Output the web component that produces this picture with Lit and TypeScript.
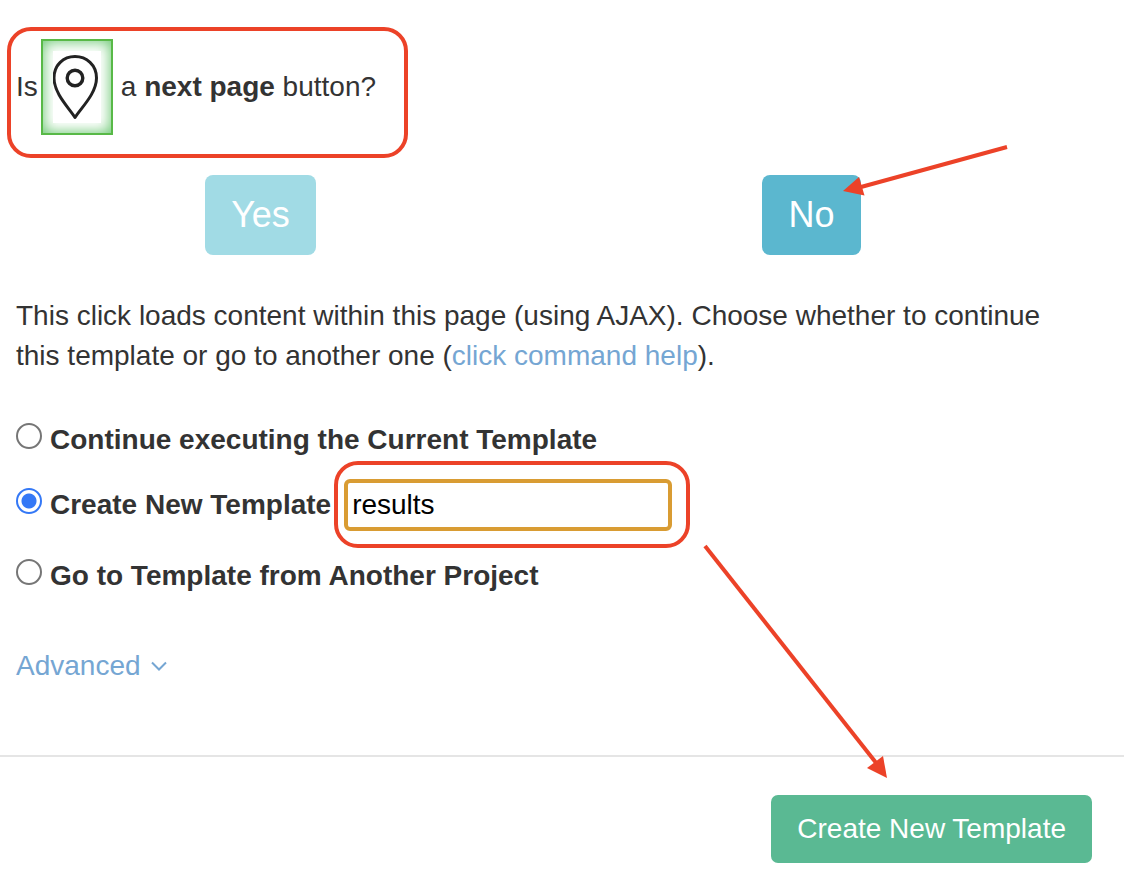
import { LitElement, html, css } from "lit";
import { customElement, state } from "lit/decorators.js";

@customElement("app-root")
export class AppRoot extends LitElement {
  @state() private choice = "create";
  @state() private templateName = "results";

  static styles = css`
    :host {
      display: block;
      background: #fff;
      color: #333;
      font-family: "Liberation Sans", Arial, sans-serif;
      font-size: 28px;
      line-height: 40px;
      overflow-x: hidden;
    }
    * { box-sizing: border-box; }
    button, input { font: inherit; margin: 0; }
    a { color: #75a6d3; text-decoration: none; }
    .content { padding: 39px 16px 69px; }
    .question {
      position: relative;
      display: flex;
      align-items: center;
      width: fit-content;
      margin: 0;
      white-space: pre;
    }
    .marker {
      display: flex;
      width: 72px;
      height: 96px;
      margin: 0 8px 0 3px;
      padding: 10px;
      border: 2px solid #58b947;
      box-shadow: inset 0 0 14px 1px #6cc873;
    }
    .marker svg { display: block; width: 48px; height: 72px; background: #fff; }
    .ring {
      position: absolute;
      border: 4px solid #ec4228;
      border-radius: 24px;
      pointer-events: none;
    }
    .ring-question { inset: -12px -32px -23px -9px; }
    .ring-name { inset: -18px -18px -17px -10px; }
    .answers {
      display: grid;
      grid-template-columns: 1fr 1fr;
      justify-items: center;
      margin: 40px 21px 41px -31px;
    }
    .anchor { position: relative; display: flex; }
    .answer {
      height: 80px;
      padding: 0 26px;
      border: 0;
      border-radius: 8px;
      color: #fff;
      font-size: 36px;
    }
    .yes { background: #a1dbe5; }
    .no { background: #5bb7cf; }
    .arrow { position: absolute; pointer-events: none; fill: #ec4228; stroke: none; }
    .arrow path.shaft { stroke: #ec4228; stroke-width: 4; }
    .arrow-no { left: 81px; top: -30px; }
    .arrow-submit { right: 203px; top: -251px; }
    .intro { margin: 0 0 44px; max-width: 1060px; }
    .options { margin: 0 0 50px; padding: 0; border: 0; }
    .option { display: flex; align-items: center; }
    .option-name { margin: 19px 0 25px; }
    .option label { display: flex; align-items: flex-start; gap: 8px; font-weight: bold; }
    .radio {
      appearance: none;
      flex: none;
      width: 26px;
      height: 26px;
      margin-top: 3px;
      border: 2px solid #767676;
      border-radius: 50%;
      background: #fff;
    }
    .radio:checked {
      border-color: #3478f6;
      background: radial-gradient(circle, #3478f6 7px, #fff 8px);
    }
    .name-field { position: relative; margin-left: 13px; }
    .name {
      display: block;
      width: 328px;
      height: 52px;
      padding: 0 4px;
      border: 4px solid #d99c33;
      border-radius: 6px;
      outline: 0;
      color: #000;
      background: #fff;
    }
    .advanced { display: flex; align-items: center; gap: 10px; width: fit-content; }
    .advanced svg { width: 16px; height: 10px; fill: none; stroke: #75a6d3; stroke-width: 2; }
    .footer {
      display: flex;
      justify-content: flex-end;
      padding: 38px 32px 19px;
      border-top: 2px solid #e5e5e5;
    }
    .submit {
      height: 68px;
      padding: 0 26px;
      border: 0;
      border-radius: 7px;
      color: #fff;
      background: #5ab993;
    }
  `;

  private radio(value: string) {
    return html`<input
      class="radio"
      type="radio"
      name="target"
      id=${value}
      .checked=${this.choice === value}
      @change=${() => (this.choice = value)}
    />`;
  }

  render() {
    return html`
      <main class="content">
        <p class="question"
          ><span>Is</span
          ><span class="marker"
            ><svg viewBox="0 0 48 72" fill="none" stroke="#222" aria-hidden="true">
              <path stroke-width="3" stroke-linejoin="round" d="M22 66.500C17 58 1 43 1 27C1 14 10.500 5.500 22 5.500S43.500 14 43.500 27C43.500 43 27 58 22 66.500Z" />
              <circle cx="22" cy="27" r="7.800" stroke-width="3.400" />
            </svg></span
          ><span>a <b>next page</b> button?</span
          ><span class="ring ring-question"></span
        ></p>

        <div class="answers">
          <div class="anchor"><button class="answer yes" type="button">Yes</button></div>
          <div class="anchor">
            <button class="answer no" type="button">No</button>
            <svg class="arrow arrow-no" width="166" height="52" aria-hidden="true">
              <path class="shaft" d="M164 2L18 42" />
              <path d="M0 46L16 32L21.500 50.500Z" />
            </svg>
          </div>
        </div>

        <p class="intro">
          This click loads content within this page (using AJAX). Choose whether to continue this
          template or go to another one (<a href="#help">click command help</a>).
        </p>

        <fieldset class="options">
          <div class="option">
            <label>${this.radio("continue")}Continue executing the Current Template</label>
          </div>
          <div class="option option-name">
            <label>${this.radio("create")}Create New Template</label>
            <div class="name-field">
              <input
                class="name"
                type="text"
                aria-label="Template name"
                .value=${this.templateName}
                @input=${(e: Event) => (this.templateName = (e.target as HTMLInputElement).value)}
              />
              <span class="ring ring-name"></span>
            </div>
          </div>
          <div class="option">
            <label>${this.radio("another")}Go to Template from Another Project</label>
          </div>
        </fieldset>

        <a class="advanced" href="#advanced"
          >Advanced<svg viewBox="0 0 16 10" aria-hidden="true"><path d="M1 1.500L8 8.500L15 1.500" /></svg
        ></a>
      </main>

      <footer class="footer">
        <div class="anchor">
          <button class="submit" type="button">Create New Template</button>
          <svg class="arrow arrow-submit" width="186" height="236" aria-hidden="true">
            <path class="shaft" d="M2 2L174 220" />
            <path d="M184 234L164 224L180 212Z" />
          </svg>
        </div>
      </footer>
    `;
  }
}
